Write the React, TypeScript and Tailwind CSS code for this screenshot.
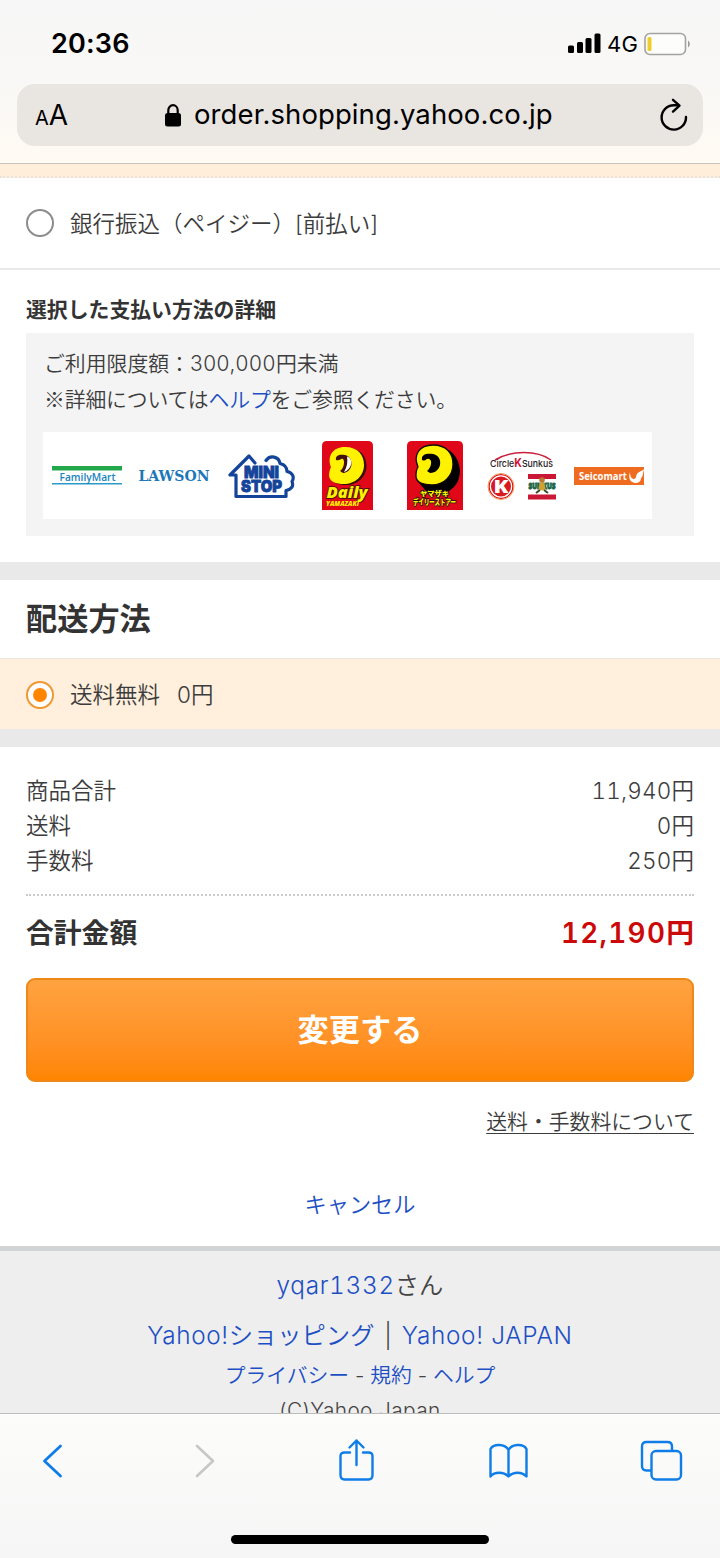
const totals = [
  { label: "商品合計", price: "11,940" },
  { label: "送料", price: "0" },
  { label: "手数料", price: "250" },
];

function StatusBar() {
  return (
    <div className="flex h-[84px] items-center justify-between pl-[51px] pr-[29px] pt-[3px]">
      <span className="text-[27px] font-semibold leading-none tracking-[0.2px] text-black">20:36</span>
      <div className="flex items-center">
        <svg width="33" height="21" viewBox="0 0 33 21">
          <rect x="0" y="12.5" width="6" height="7.5" rx="1.5" />
          <rect x="9" y="9" width="6" height="11" rx="1.5" />
          <rect x="17.5" y="5" width="6" height="15" rx="1.5" />
          <rect x="26.5" y="0.5" width="6" height="19.5" rx="1.5" />
        </svg>
        <span className="ml-[6px] w-[32px] text-[22px] leading-none tracking-[0.3px] text-black">4G</span>
        <svg className="ml-[5px]" width="47" height="24" viewBox="0 0 47 24">
          <rect x="1" y="1.5" width="40.5" height="21" rx="5" fill="#fdfdfc" stroke="#a3a3a1" strokeWidth="1.6" />
          <rect x="3.5" y="5" width="4" height="14" rx="1.5" fill="#f0cd28" />
          <path d="M44 8.5c2.4 1.5 2.4 5.5 0 7z" fill="#9b9b99" />
        </svg>
      </div>
    </div>
  );
}

function AddressBar() {
  return (
    <div className="mx-[17px] flex h-[62px] items-center rounded-[18px] bg-[#e9e5e0] text-black">
      <div className="flex w-[147px] items-baseline pl-[18px] leading-none">
        <span className="text-[20px]">A</span>
        <span className="text-[28px]">A</span>
      </div>
      <svg width="18" height="24" viewBox="0 0 18 24">
        <rect x="1" y="10" width="16" height="13.5" rx="2.5" />
        <path d="M4.3 11V7.2a4.7 5 0 0 1 9.4 0V11" fill="none" stroke="#000" strokeWidth="2.2" />
      </svg>
      <span className="ml-[12px] w-[400px] whitespace-nowrap text-[27.5px] leading-none tracking-[0.1px]">order.shopping.yahoo.co.jp</span>
      <svg className="ml-[65px] shrink-0" width="30" height="34" viewBox="0 0 30 34" fill="none" stroke="#000" strokeWidth="2.4" strokeLinecap="round" strokeLinejoin="round">
        <path d="M27 19A12.2 12.2 0 1 1 14.8 7.2H19" />
        <path d="M14 1.8l6.5 5.8-6.5 6" />
      </svg>
    </div>
  );
}

function StoreLogos() {
  return (
    <div className="flex h-[87px] w-[609px] items-center bg-white pl-[9px]">
      <svg width="70" height="20" viewBox="0 0 70 20">
        <rect width="70" height="4.5" fill="#22a84b" />
        <rect y="17" width="70" height="1.5" fill="#2a9bc7" />
        <text x="7.5" y="14.5" fontFamily="Open Sans" fontWeight="600" fontSize="11" textLength="56" lengthAdjust="spacingAndGlyphs" fill="#1784bd">FamilyMart</text>
      </svg>
      <svg className="ml-[16px]" width="72" height="14" viewBox="0 0 72 14">
        <text x="0.5" y="12" fontFamily="DejaVu Serif" fontWeight="700" fontSize="14" textLength="71" lengthAdjust="spacingAndGlyphs" fill="#1c78b8">LAWSON</text>
      </svg>
      <svg className="ml-[18px]" width="68" height="46" viewBox="0 0 68 46">
        <path d="M27 10L21 3 2 22h6v21.5h50v-6c5-1 8-4 6-9 3-5 0-9-5-10 0-5-3-7-7-8-1-7-10-9-14-3" fill="none" stroke="#14439a" strokeWidth="3.2" strokeLinejoin="round" strokeLinecap="round" />
        <g fontFamily="Inter" fontWeight="900" fill="#14439a" stroke="#14439a" strokeWidth="0.8" fontSize="16">
          <text x="16" y="24.5" textLength="35" lengthAdjust="spacingAndGlyphs">MINI</text>
          <text x="13" y="39" textLength="41" lengthAdjust="spacingAndGlyphs">STOP</text>
        </g>
      </svg>
      <svg className="ml-[26px]" width="51" height="69" viewBox="0 0 51 69">
        <path d="M0 69V5q0-5 5-5h41q5 0 5 5v64z" fill="#e00719" />
        <path d="M9 26C5 16 10 6 23 6c13 0 19 8 19 18 0 11-9 19-20 19-8 0-14-2-15-8 0-4 1-7 2-9z" fill="#37100b" transform="translate(2.5 1)" />
        <path d="M9 26C5 16 10 6 23 6c13 0 19 8 19 18 0 11-9 19-20 19-8 0-14-2-15-8 0-4 1-7 2-9z" fill="#fff200" />
        <path d="M14 19c-1-5 4-6 9-5 9 2 9 17-2 18l-3-2c4-3 5-10 3-12-2-1-3 2-7 1z" fill="#43120c" />
        <path d="M25 15.5c7 2 5 13-3 15.5 3-5 4-10 3-15.5z" fill="#fff" />
        <g fontFamily="Open Sans" fontStyle="italic" fontWeight="800" fill="#fff200">
          <text x="4.5" y="57" fontSize="15" textLength="41" lengthAdjust="spacingAndGlyphs" stroke="#37100b" strokeWidth="1.5" paintOrder="stroke">Daily</text>
          <text x="4" y="64.5" fontSize="6.5" textLength="33" lengthAdjust="spacingAndGlyphs">YAMAZAKI</text>
        </g>
      </svg>
      <svg className="ml-[34px]" width="56" height="69" viewBox="0 0 56 69">
        <path d="M0 69V5q0-5 5-5h46q5 0 5 5v64z" fill="#e00719" />
        <path d="M12 42l7 8h23C56 42 57 20 42 9z" fill="#000" />
        <path d="M11 26C6 14 12 4 26 4c14 0 20 9 20 19 0 12-9 21-21 21-8 0-16-2-16-9 0-4 0-6 2-9z" fill="#fff200" stroke="#110b04" strokeWidth="1.3" />
        <path d="M15 19c-1-6 5-7 11-6 11 2 9 19-3 19l-3-2c4-3 6-11 2-12-3-1-3 3-7 1z" fill="#000" />
        <g fontFamily="Noto Sans CJK JP" fontWeight="900" fill="#fff200" stroke="#111" strokeWidth="1.6" paintOrder="stroke">
          <text x="13" y="54.5" fontSize="7" textLength="29" lengthAdjust="spacingAndGlyphs">ヤマザキ</text>
          <text x="6" y="63.5" fontSize="8" textLength="43" lengthAdjust="spacingAndGlyphs">デイリーストアー</text>
        </g>
      </svg>
      <svg className="ml-[24px]" width="72" height="50" viewBox="0 0 72 50">
        <path d="M8 9C24-1 50-1 64 9" fill="none" stroke="#c9203c" strokeWidth="1.5" />
        <text x="3" y="15.5" fontFamily="Inter" fontWeight="500" fontSize="9.5" textLength="63" lengthAdjust="spacingAndGlyphs" fill="#292326">Circle<tspan fill="#d31335" fontWeight="700" fontSize="11.5">K</tspan>Sunkus</text>
        <circle cx="14" cy="35.5" r="12.5" fill="#d71920" />
        <circle cx="14" cy="35.5" r="13" fill="none" stroke="#ef9a58" strokeWidth="1" />
        <circle cx="14" cy="35.5" r="10.6" fill="none" stroke="#fff" strokeWidth="1.2" />
        <text x="6.5" y="42" fontFamily="Open Sans" fontWeight="800" fontSize="18" textLength="15" lengthAdjust="spacingAndGlyphs" fill="#fff">K</text>
        <rect x="41" y="23" width="28" height="5" fill="#c91735" />
        <rect x="41" y="43.5" width="28" height="5" fill="#c91735" />
        <text x="41.5" y="38" fontFamily="Open Sans" fontWeight="800" fontSize="9" textLength="27" lengthAdjust="spacingAndGlyphs" fill="#1b6448" stroke="#1b6448" strokeWidth="0.9">SUNKUS</text>
        <circle cx="55" cy="29" r="2.8" fill="#b97931" />
        <path d="M52.5 32h5l1 6-3 1.5-4-1z" fill="#d0a12d" />
        <path d="M53 39l-4 3M57 39l4 3" stroke="#374927" strokeWidth="2" />
      </svg>
      <svg className="ml-[15px]" width="70" height="18" viewBox="0 0 70 18">
        <rect width="70" height="18" fill="#ef6b20" />
        <text x="5" y="12.5" fontFamily="Open Sans" fontWeight="700" fontSize="10" textLength="48" lengthAdjust="spacingAndGlyphs" fill="#fff">Seicomart</text>
        <path d="M56 5c0 5 2 7 4 7s2-3 3-5c2-3 4-2 7-5-1 4-1 8-3 9 0 4-3 5-6 5-5-1-7-5-5-11z" fill="#fff" />
      </svg>
    </div>
  );
}

function Toolbar() {
  return (
    <nav className="h-[145px] border-t border-[#bdbdbd] bg-linear-to-b from-[#fcfcfb] to-[#f6f6f6]">
      <div className="flex items-center pl-[42px] pt-[23px] text-[#0f7de8]">
        <svg width="22" height="46" viewBox="0 0 22 46" fill="none" stroke="currentColor" strokeWidth="2.8" strokeLinecap="round" strokeLinejoin="round">
          <path d="M18.5 9L2.5 24l16 15" />
        </svg>
        <svg className="ml-[130px] text-[#c7c7c8]" width="22" height="46" viewBox="0 0 22 46" fill="none" stroke="currentColor" strokeWidth="2.6" strokeLinecap="round" strokeLinejoin="round">
          <path d="M3 9l16 15L3 39" />
        </svg>
        <svg className="ml-[122px]" width="37" height="46" viewBox="0 0 37 46" fill="none" stroke="currentColor" strokeWidth="2.4" strokeLinecap="round" strokeLinejoin="round">
          <path d="M12 15.500H6.500q-4 0-4 3.500v19q0 4.500 4 4.500h24q4 0 4-4.500V19q0-3.500-4-3.500H25" />
          <path d="M18.500 28V3.500M11.500 10.500l7-7 7 7" />
        </svg>
        <svg className="ml-[113px]" width="42" height="46" viewBox="0 0 42 46" fill="none" stroke="currentColor" strokeWidth="2.4" strokeLinejoin="round">
          <path d="M20.500 39.500V13C17 6.500 5.500 6.500 2.500 12v27.500c4-5 13-5 18 0 5-5 13-5 18 0V12C35.500 6.500 24 6.500 20.500 13" />
        </svg>
        <svg className="ml-[109px]" width="45" height="46" viewBox="0 0 45 46" fill="none" stroke="currentColor" strokeWidth="2.4" strokeLinejoin="round">
          <path d="M12.500 33.500H7.500q-4.500 0-4.500-4.500V9.500Q3 5 7.500 5h21q4.500 0 4.500 4.500v4.500" />
          <rect x="12.500" y="14" width="29.500" height="28.500" rx="4.500" />
        </svg>
      </div>
      <div className="mx-auto mt-[52px] h-[9px] w-[258px] rounded-full bg-black" />
    </nav>
  );
}

export default function App() {
  return (
    <div className="flex h-[1558px] w-[720px] flex-col overflow-hidden bg-white font-['Inter','Noto_Sans_CJK_JP',sans-serif] text-[#3c3c3c]">
      <header className="h-[164px] shrink-0 border-b border-[#c9c5bd] bg-linear-to-b from-[#f7f7f7] via-[#f9f8f6] to-[#fffaf3]">
        <StatusBar />
        <AddressBar />
      </header>

      <main className="h-[1249px] shrink-0 overflow-hidden font-[350]">
        <div className="h-[14px] border-b-2 border-dotted border-[#e8e3dc] bg-[#ffeeda]" />
        <label className="flex h-[92px] items-center border-b-2 border-[#e9e9e9] pl-[26px]">
          <span className="size-[28px] rounded-full border-2 border-[#8c8c8c]" />
          <span className="ml-[16px] whitespace-nowrap pt-[2px] text-[22.5px]">銀行振込（ペイジー）[前払い]</span>
        </label>

        <section className="h-[292px] px-[26px] pt-[25px]">
          <h3 className="h-[38px] text-[20.85px] font-bold leading-[30px] text-[#333]">選択した支払い方法の詳細</h3>
          <div className="h-[203px] bg-[#f4f4f4] pl-[17px] pt-[13px]">
            <div className="h-[86px] whitespace-nowrap pl-[1px] text-[20.85px] leading-[36px]">
              <p>ご利用限度額：<span className="tracking-[0.6px]">300,000</span>円未満</p>
              <p className="tracking-[-0.15px]"><span className="font-['Noto_Sans_CJK_JP',sans-serif] leading-none">※</span>詳細については<a className="text-[#1d4fc4]">ヘルプ</a>をご参照ください。</p>
            </div>
            <StoreLogos />
          </div>
        </section>

        <section className="h-[185px] border-y-[18px] border-[#e9e9e9]">
          <h2 className="flex h-[79px] items-center border-b border-[#e9e5df] pl-[26px] pt-[1px] text-[31.2px] font-bold text-[#333]">配送方法</h2>
          <label className="flex h-[70px] items-center bg-[#ffefdc] pl-[26px] pt-[1px]">
            <span className="flex size-[28px] items-center justify-center rounded-full border-2 border-[#ee982f] bg-white">
              <span className="size-[14px] rounded-full bg-[#ff8500]" />
            </span>
            <span className="ml-[16px] pt-[1px] text-[22.5px]">送料無料</span>
            <span className="ml-[17px] pt-[1px] text-[22.5px]">0円</span>
          </label>
        </section>

        <section className="px-[26px] pt-[26px]">
          <dl className="h-[123px] border-b-2 border-dotted border-[#cacaca] text-[22.5px] leading-[35px]">
            {totals.map((row) => (
              <div key={row.label} className="flex justify-between">
                <dt>{row.label}</dt>
                <dd><span className="tabular-nums tracking-[0.2px]">{row.price}</span>円</dd>
              </div>
            ))}
          </dl>
          <div className="flex h-[82px] items-center justify-between pb-[6px] text-[27.8px] font-bold">
            <span className="text-[#333]">合計金額</span>
            <span className="text-[#cb0909]"><span className="font-semibold tabular-nums tracking-[1.3px]">12,190</span>円</span>
          </div>
          <button className="block h-[104px] w-full rounded-[9px] border-2 border-[#ee8818] bg-linear-to-b from-[#ffa340] to-[#ff8500] text-[31.2px] font-bold text-white">変更する</button>
          <p className="mt-[25px] text-right text-[20.85px] leading-[30px]">
            <a className="underline decoration-1 underline-offset-[4px]">送料・手数料について</a>
          </p>
          <p className="mt-[53px] text-center text-[22.2px] leading-[30px] text-[#1d4fc4]">キャンセル</p>
        </section>

        <footer className="mt-[26px] h-[170px] border-t-[5px] border-[#d1d3d5] bg-[#eee] pt-[16px] text-center text-[24.3px] text-[#444]">
          <p className="leading-[36px]"><a className="tabular-nums tracking-[0.7px] text-[#1d4fc4]">yqar1332</a>さん</p>
          <p className="mt-[14px] leading-[36px]"><a className="text-[#1d4fc4]"><span className="tracking-[0.6px]">Yahoo!</span>ショッピング</a><span className="px-[3px]"> | </span><a className="tracking-[0.7px] text-[#1d4fc4]">Yahoo! JAPAN</a></p>
          <p className="mt-[7px] text-[20.8px] leading-[32px]"><a className="text-[#1d4fc4]">プライバシー</a> - <a className="text-[#1d4fc4]">規約</a> - <a className="text-[#1d4fc4]">ヘルプ</a></p>
          <p className="mt-[3px] text-[20.8px] leading-[32px] tracking-[0.4px]">(C)Yahoo Japan</p>
        </footer>
      </main>

      <Toolbar />
    </div>
  );
}
